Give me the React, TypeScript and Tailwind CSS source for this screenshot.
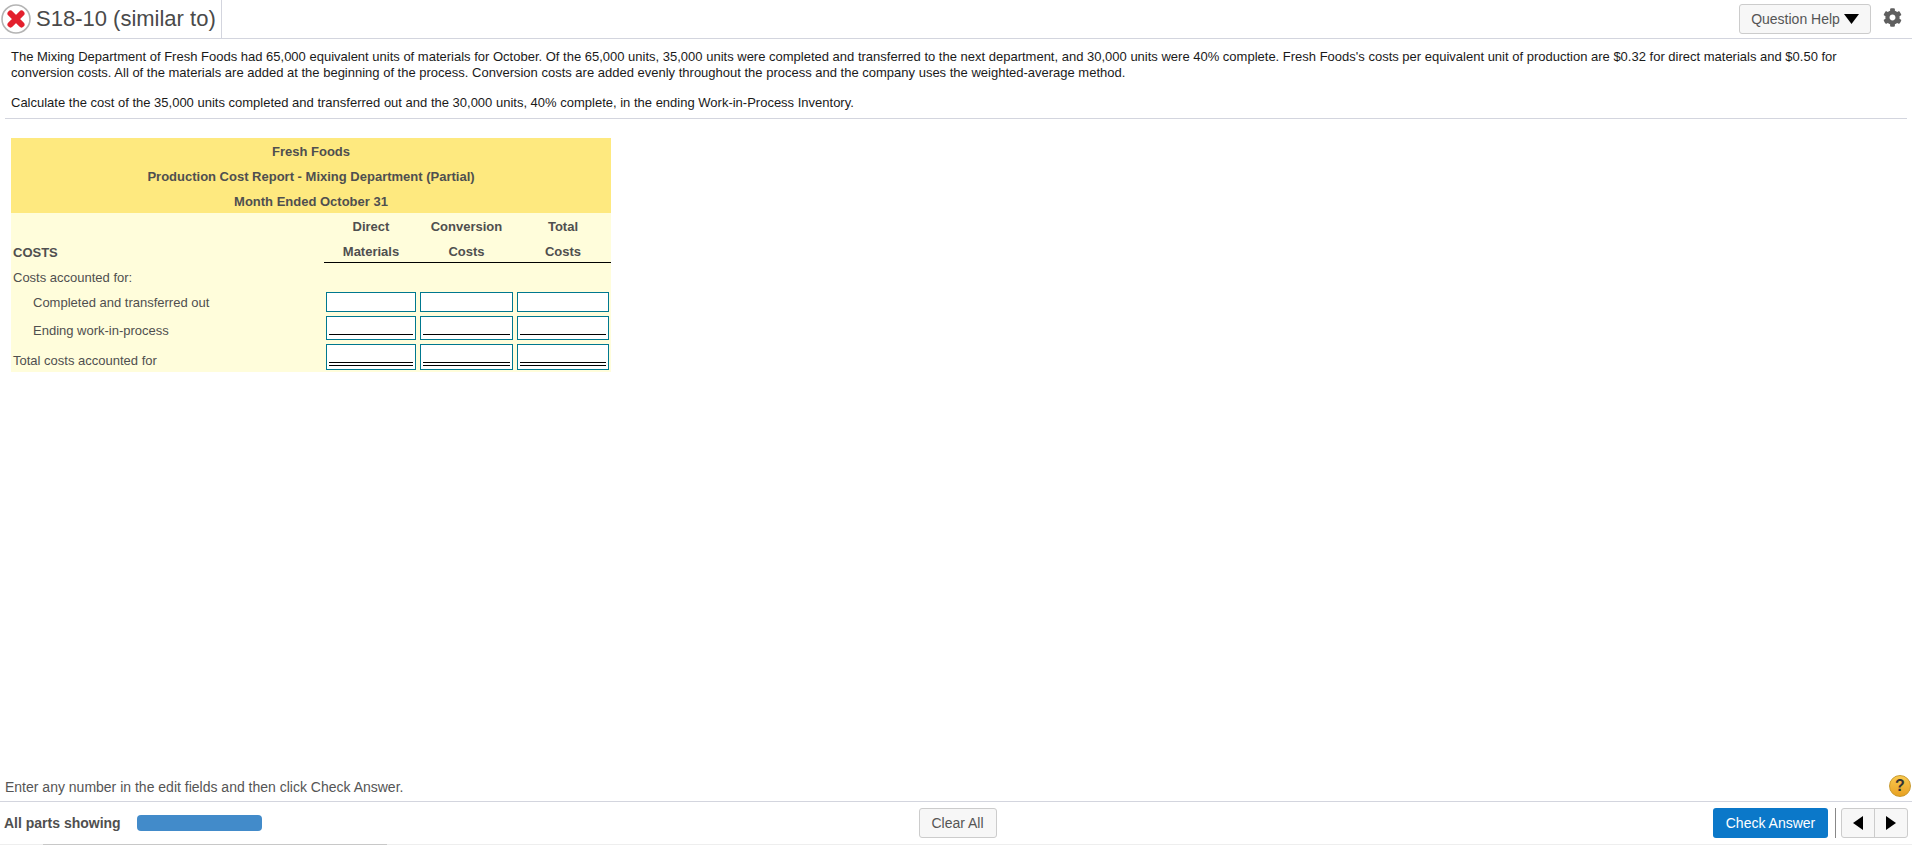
import React from "react";
import { FaCog } from "react-icons/fa";

const font = { fontFamily: '"Liberation Sans", Arial, sans-serif' };

function Cell({ kind }: { kind: "plain" | "single" | "double" }) {
  return (
    <div className={`mx-[2px] border border-[#00788f] bg-white flex flex-col justify-end px-[2px] ${kind === "plain" ? "h-[20px]" : kind === "single" ? "h-[24px] pb-[4px]" : "h-[26px] pb-[3px]"}`}>
      {kind === "single" && <div className="h-px bg-black" />}
      {kind === "double" && <div className="h-[4px] border-y border-black" />}
    </div>
  );
}

function Row({ label, indent, kind, rowClass, labelClass }: { label: string; indent?: boolean; kind: "plain" | "single" | "double"; rowClass: string; labelClass: string }) {
  return (
    <div className={`h-[28px] grid grid-cols-[313px_94px_97px_96px] items-start ${rowClass}`}>
      <div className={`text-[13px] text-[#4f4f4f] self-center ${labelClass} ${indent ? "pl-[22px]" : "pl-[2px]"}`}>{label}</div>
      <Cell kind={kind} />
      <Cell kind={kind} />
      <Cell kind={kind} />
    </div>
  );
}

export default function App() {
  return (
    <div className="h-[845px] w-[1912px] bg-white flex flex-col overflow-hidden relative" style={font}>
      <header className="h-[39px] shrink-0 border-b border-[#d3d5de] flex items-stretch">
        <div className="w-[222px] border-r border-[#d3d5de] flex items-center pl-[1px]">
          <svg width="30" height="30" viewBox="0 0 30 30" className="shrink-0">
            <circle cx="15" cy="15" r="14" fill="#fff" stroke="#b4b4b4" strokeWidth="1.6" />
            <path d="M9.5 9.5L20.5 20.5M20.5 9.5L9.5 20.5" stroke="#e3202d" strokeWidth="6" strokeLinecap="round" />
          </svg>
          <span className="ml-[5px] text-[22px] leading-none whitespace-nowrap text-[#4a4a4a]">S18-10 (similar to)</span>
        </div>
        <div className="flex-1 flex items-start justify-end">
          <button className="mt-[4px] w-[132px] h-[30px] rounded-[3px] border border-[#ccc] bg-[#f7f7f7] text-[14px] text-[#555] flex items-center justify-center gap-[4px]">
            Question Help
            <svg width="15" height="10" viewBox="0 0 15 10"><path d="M0 0H15L7.5 10Z" fill="#000" /></svg>
          </button>
          <FaCog className="mt-[8px] ml-[12px] mr-[10px] w-[19px] h-[19px] text-[#5f5f5f]" />
        </div>
      </header>

      <main className="flex-1 pl-[11px] pr-[5px] text-[13px] leading-[16px] text-[#1a1a1a]">
        <p className="pt-[10px] w-[1845px]">
          The Mixing Department of Fresh Foods had 65,000 equivalent units of materials for October. Of the 65,000 units, 35,000 units were completed and transferred to the next department, and 30,000 units were 40% complete. Fresh Foods's costs per equivalent unit of production are $0.32 for direct materials and $0.50 for conversion costs. All of the materials are added at the beginning of the process. Conversion costs are added evenly throughout the process and the company uses the weighted-average method.
        </p>
        <p className="mt-[14px]">
          Calculate the cost of the 35,000 units completed and transferred out and the 30,000 units, 40% complete, in the ending Work-in-Process Inventory.
        </p>
        <div className="mt-[7px] -ml-[6px] border-t border-[#d3d5de]" />
        <section className="mt-[19px] w-[600px] bg-[#fffddb]">
          <div className="bg-[#fee97f] font-bold text-[13px] text-[#4f4f4f] text-center">
            <div className="h-[25px] pt-[2px] flex items-center justify-center">Fresh Foods</div>
            <div className="h-[25px] pt-[2px] flex items-center justify-center">Production Cost Report - Mixing Department (Partial)</div>
            <div className="h-[25px] pt-[2px] flex items-center justify-center">Month Ended October 31</div>
          </div>
          <div className="grid grid-cols-[313px_94px_97px_96px] font-bold text-[13px] text-[#4f4f4f] text-center">
            <div className="h-[25px]" />
            <div className="h-[25px] pt-[2px] flex items-center justify-center">Direct</div>
            <div className="h-[25px] pt-[2px] flex items-center justify-center">Conversion</div>
            <div className="h-[25px] pt-[2px] flex items-center justify-center">Total</div>
            <div className="h-[25px] pt-[4px] flex items-center text-left pl-[2px]">COSTS</div>
            <div className="h-[25px] pt-[4px] flex items-center justify-center border-b border-black">Materials</div>
            <div className="h-[25px] pt-[4px] flex items-center justify-center border-b border-black">Costs</div>
            <div className="h-[25px] pt-[4px] flex items-center justify-center border-b border-black">Costs</div>
          </div>
          <div className="h-[25px] pt-[5px] flex items-center pl-[2px] text-[13px] text-[#4f4f4f]">Costs accounted for:</div>
          <Row label="Completed and transferred out" indent kind="plain" rowClass="pt-[4px]" labelClass="mt-[-2px]" />
          <Row label="Ending work-in-process" indent kind="single" rowClass="" labelClass="mt-[1px]" />
          <Row label="Total costs accounted for" kind="double" rowClass="" labelClass="mt-[5px]" />
        </section>
      </main>

      <div className="h-[25px] shrink-0 flex items-start justify-between pl-[5px] pr-[1px] text-[14px] text-[#555]">
        <span className="mt-[1px]">Enter any number in the edit fields and then click Check Answer.</span>
        <div className="w-[22px] h-[22px] mt-[-1px] rounded-full bg-linear-to-b from-[#f9c94e] to-[#e8a120] border border-[#c99a2e] flex items-center justify-center text-[16px] font-bold text-[#333]">?</div>
      </div>
      <footer className="h-[44px] shrink-0 border-t border-[#d3d5de] border-b-[#eeeeee] border-b flex items-center pl-[4px] pr-[4px]">
        <span className="w-[133px] text-[14px] font-bold text-[#4f4f4f]">All parts showing</span>
        <div className="w-[125px] h-[16px] rounded-[4px] bg-[#428bca]" />
        <div className="flex-1 flex justify-center">
          <button className="mr-[60px] w-[78px] h-[30px] rounded-[3px] border border-[#ccc] bg-[#f7f7f7] text-[14px] text-[#555]">Clear All</button>
        </div>
        <button className="w-[115px] h-[30px] rounded-[3px] bg-[#0b78c9] text-[14px] text-white">Check Answer</button>
        <div className="ml-[7px] w-px h-[30px] bg-[#888]" />
        <div className="ml-[5px] w-[67px] h-[30px] rounded-[3px] border border-[#ccc] bg-[#f7f7f7] flex">
          <div className="flex-1 border-r border-[#ccc] flex items-center justify-center">
            <svg width="10" height="14" viewBox="0 0 10 14"><path d="M10 0V14L0 7Z" fill="#000" /></svg>
          </div>
          <div className="flex-1 flex items-center justify-center">
            <svg width="10" height="14" viewBox="0 0 10 14"><path d="M0 0V14L10 7Z" fill="#000" /></svg>
          </div>
        </div>
      </footer>
      <div className="absolute left-[43px] bottom-0 w-[344px] h-px bg-[#c8c8c8]" />
    </div>
  );
}
